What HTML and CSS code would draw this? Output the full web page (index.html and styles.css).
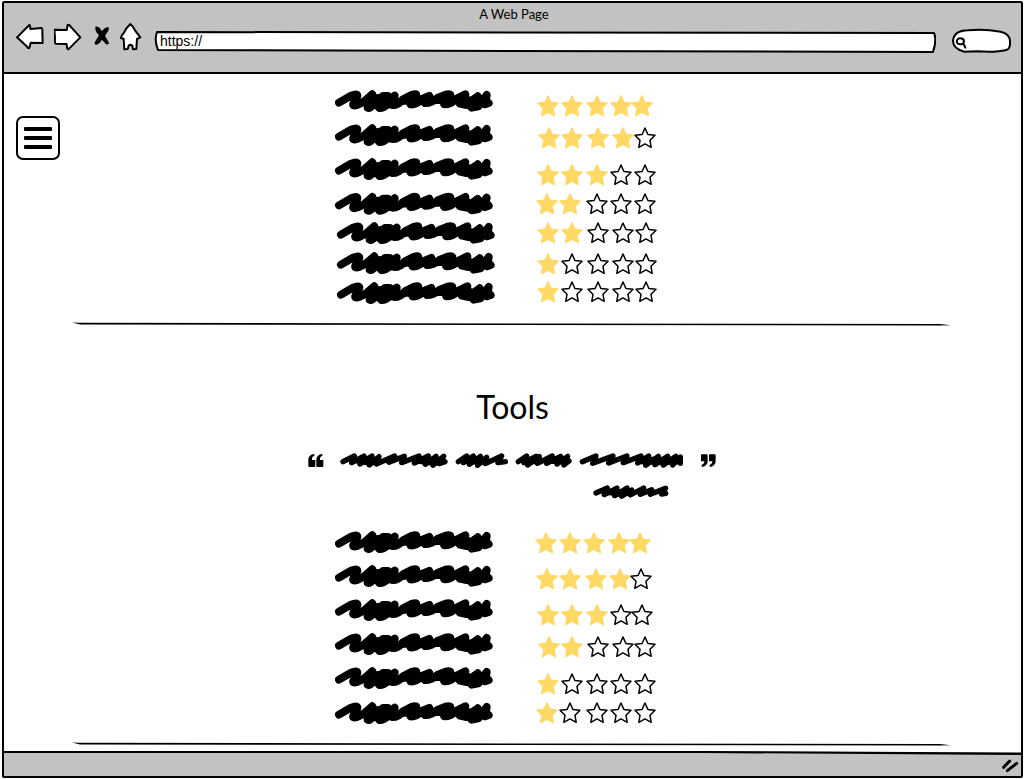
FILE: index.html
```html
<!DOCTYPE html>
<html lang="en">
<head>
<meta charset="utf-8">
<title>A Web Page</title>
<link rel="stylesheet" href="styles.css">
</head>
<body>
<svg class="defs" aria-hidden="true">
  <symbol id="full" overflow="visible"><path class="star-full" d="M0-10.500 3-4 10.500-3 5.300 2.500 6.600 10 0 6.500-6.600 10-5.300 2.500-10.500-3-3-4Z"/></symbol>
  <symbol id="empty" overflow="visible"><path class="star-empty" d="M0-10 2.900-3.500 10-2.700 5 2.300 6.200 9.300 0 5.900-6.200 9.300-5 2.300-10-2.700-2.900-3.500Z"/></symbol>
  <symbol id="skill" overflow="visible">
    <path class="ink" d="M42 53 78 32Q98 24 97 33L86 54Q80 66 98 59L118 49 142 28 128 68Q134 72 145 58L174 33 188 33 163 69Q175 70 190 55L209 32 203 60Q220 60 234 43L262 29Q276 24 273 34L257 58Q272 60 291 42L313 33 300 54Q320 54 339 38L362 29Q379 24 375 35L358 58Q378 58 391 43L421 28 405 56 425 60 458 34 440 68 460 64 485 30 480 58 491 54"/>
    <path d="M128 45 140 28 174 27 210 30 218 55 203 68 165 75 130 68ZM235 38 265 27 270 58 225 60ZM275 50 310 30 312 54 290 60ZM335 40 370 27 370 57 330 57ZM398 38 421 22 435 35 458 24 470 34 485 25 492 58 440 74 410 65Z"/>
  </symbol>
</svg>
<div class="window">
  <header class="chrome">
    <div class="title">A Web Page</div>
    <div class="toolbar">
      <button class="tool" aria-label="Back"><svg width="28" height="32" viewBox="48 66 84 96"><path class="outline" d="M51 112 88 75Q91 75 91 87L125 84Q128 86 127 96L128 129 92 128 88 144Q85 146 80 139Z"/></svg></button>
      <button class="tool" aria-label="Forward"><svg width="28" height="32" viewBox="162 66 84 96"><path class="outline" d="M163 89 200 90 203 75Q208 73 214 82L241 112 205 148Q201 149 200 132L167 131Q164 129 165 112Z"/></svg></button>
      <button class="tool" aria-label="Stop"><svg width="18" height="32" viewBox="276 66 54 96"><path d="M286 80Q294 77 301 86L306 94Q314 82 323 81 329 82 325 92L315 107 327 128Q327 135 318 133L306 119Q297 134 287 134 281 132 286 124L297 106Q284 94 286 80Z"/></svg></button>
      <button class="tool" aria-label="Home"><svg width="22" height="32" viewBox="359 66 66 96"><path class="outline" d="M390 72Q400 80 404 91L420 112 410 117 408 147 398 148 396 137Q390 132 385 137L382 147 372 148 370 117 362 114Q364 105 371 98Q377 84 390 72Z"/></svg></button>
      <div class="address">
        <svg width="100%" height="32" viewBox="0 0 782 32" preserveAspectRatio="none" aria-hidden="true"><path class="field" d="M3 10 780 11Q783 18 779 30L4 28Q0 18 3 10Z"/></svg>
        <input class="url" type="text" value="https://" aria-label="Address">
      </div>
      <div class="search">
        <svg width="60" height="32" viewBox="156 66 180 96" aria-hidden="true"><path class="outline" d="M159 123Q161 92 204 91 251 86 302 95 329 101 330 122 332 147 319 150 287 158 232 154L193 155Q159 146 159 123Z"/><path class="lens" d="M191 132 196 143M182 115C168 113 166 132 179 133 196 134 195 116 182 115Z"/></svg>
        <input class="query" type="search" aria-label="Search">
      </div>
    </div>
  </header>

  <main class="page">
    <button class="menu" aria-label="Menu"><span></span><span></span><span></span></button>

    <ul class="skills">
      <li class="row"><svg class="name" viewBox="30 -3 480 102"><use href="#skill"/></svg><svg class="stars" role="img" aria-label="5 of 5"><use href="#full" x="15" y="22"/><use href="#full" x="39" y="22"/><use href="#full" x="64" y="22"/><use href="#full" x="88" y="22"/><use href="#full" x="109" y="22"/></svg></li>
      <li class="row"><svg class="name" viewBox="30 -3 480 102"><use href="#skill"/></svg><svg class="stars" role="img" aria-label="4 of 5"><use href="#full" x="16" y="20"/><use href="#full" x="39" y="20"/><use href="#full" x="65" y="20"/><use href="#full" x="90" y="20"/><use href="#empty" x="112" y="20"/></svg></li>
      <li class="row"><svg class="name" viewBox="30 -3 480 102"><use href="#skill"/></svg><svg class="stars" role="img" aria-label="3 of 5"><use href="#full" x="15" y="23"/><use href="#full" x="39" y="23"/><use href="#full" x="64" y="23"/><use href="#empty" x="88" y="23"/><use href="#empty" x="112" y="23"/></svg></li>
      <li class="row tight"><svg class="name" viewBox="30 -3 480 102"><use href="#skill" y="2"/></svg><svg class="stars" role="img" aria-label="2 of 5"><use href="#full" x="14" y="18"/><use href="#full" x="37" y="18"/><use href="#empty" x="64" y="18"/><use href="#empty" x="88" y="18"/><use href="#empty" x="112" y="18"/></svg></li>
      <li class="row tight"><svg class="name" viewBox="30 -3 480 102"><use href="#skill" x="6"/></svg><svg class="stars" role="img" aria-label="2 of 5"><use href="#full" x="15" y="17"/><use href="#full" x="39" y="17"/><use href="#empty" x="65" y="17"/><use href="#empty" x="90" y="17"/><use href="#empty" x="113" y="17"/></svg></li>
      <li class="row tight"><svg class="name" viewBox="30 -3 480 102"><use href="#skill" x="6"/></svg><svg class="stars" role="img" aria-label="1 of 5"><use href="#full" x="15" y="18"/><use href="#empty" x="39" y="18"/><use href="#empty" x="65" y="18"/><use href="#empty" x="90" y="18"/><use href="#empty" x="113" y="18"/></svg></li>
      <li class="row"><svg class="name" viewBox="30 -3 480 102"><use href="#skill" x="6"/></svg><svg class="stars" role="img" aria-label="1 of 5"><use href="#full" x="15" y="16"/><use href="#empty" x="39" y="16"/><use href="#empty" x="65" y="16"/><use href="#empty" x="90" y="16"/><use href="#empty" x="113" y="16"/></svg></li>
    </ul>

    <svg class="rule" viewBox="0 0 879 4" preserveAspectRatio="none" aria-hidden="true"><path d="M0 .5 8 .8 868 2 879 3.300 868 3.600 8 2.400Z"/></svg>

    <h1 class="heading">Tools</h1>
    <div class="quote">
      <svg width="16" height="20" viewBox="24 195 48 60" aria-hidden="true"><path d="M43 207V213Q35 214 36 225H46V243Q46 246 42 246H28Q25 246 25 243V223Q26 209 43 207ZM67 207V213Q59 214 60 225H70V243Q70 246 66 246H52Q49 246 49 243V223Q50 209 67 207Z"/></svg>
      <svg class="words" width="345" height="52" viewBox="120 195 1035 156" role="img" aria-label="Quote">
        <path class="ink small" d="M129 230 163 213 155 233 192 213 180 237 216 213 208 240 237 215 229 237 284 213 267 232 313 214 305 233 357 213 343 234 385 213 376 238 408 214 399 241 431 214 417 236 435 230M475 230 500 213 490 233 520 213 508 238 541 214 533 241 560 217 556 236 605 213 594 233 616 230"/>
        <path class="ink small" d="M655 230 680 213 672 233 708 214 683 240 718 215 712 235 757 213 740 235 782 214 771 237 803 214 792 240 807 228M847 230 888 213 878 235 939 213 926 234 981 213 970 233 1023 213 1013 234 1046 213 1037 241 1075 214 1065 239 1103 214 1090 240 1127 214 1118 240 1141 216V235"/>
        <path class="ink small" d="M888 324 922 309 913 329 951 309 944 332 981 309 965 334 995 315 991 330 1031 309 1021 328 1055 314 1051 328 1097 310 1085 327 1097 325"/>
        <path d="M190 215H235V238L210 242 160 234ZM265 218H285V234H245ZM360 215H430L438 232 400 242 340 235ZM490 215 550 215 550 238 535 241 480 232ZM665 215H715V236L680 240 660 230ZM755 215 803 215 803 238 735 236ZM1025 215H1145V238L1100 240 1015 238ZM925 312H985V330L965 335 920 330ZM1020 315H1031V328H1000Z"/>
      </svg>
      <svg width="16" height="20" viewBox="702 195 48 60" aria-hidden="true"><path d="M704 208H718Q722 208 722 212V230Q720 243 704 246V239Q712 238 712 229H702V211Q702 208 704 208ZM728 208H742Q746 208 746 212V230Q744 243 728 246V239Q736 238 736 229H726V211Q726 208 728 208Z"/></svg>
    </div>

    <ul class="skills">
      <li class="row"><svg class="name" viewBox="30 -3 480 102"><use href="#skill"/></svg><svg class="stars" role="img" aria-label="5 of 5"><use href="#full" x="13" y="18"/><use href="#full" x="37" y="18"/><use href="#full" x="61" y="18"/><use href="#full" x="86" y="18"/><use href="#full" x="107" y="18"/></svg></li>
      <li class="row"><svg class="name" viewBox="30 -3 480 102"><use href="#skill"/></svg><svg class="stars" role="img" aria-label="4 of 5"><use href="#full" x="14" y="20"/><use href="#full" x="37" y="20"/><use href="#full" x="63" y="20"/><use href="#full" x="87" y="20"/><use href="#empty" x="108" y="20"/></svg></li>
      <li class="row"><svg class="name" viewBox="30 -3 480 102"><use href="#skill"/></svg><svg class="stars" role="img" aria-label="3 of 5"><use href="#full" x="15" y="22"/><use href="#full" x="39" y="22"/><use href="#full" x="64" y="22"/><use href="#empty" x="88" y="22"/><use href="#empty" x="109" y="22"/></svg></li>
      <li class="row"><svg class="name" viewBox="30 -3 480 102"><use href="#skill"/></svg><svg class="stars" role="img" aria-label="2 of 5"><use href="#full" x="16" y="20"/><use href="#full" x="39" y="20"/><use href="#empty" x="65" y="20"/><use href="#empty" x="90" y="20"/><use href="#empty" x="112" y="20"/></svg></li>
      <li class="row"><svg class="name" viewBox="30 -3 480 102"><use href="#skill"/></svg><svg class="stars" role="img" aria-label="1 of 5"><use href="#full" x="15" y="23"/><use href="#empty" x="39" y="23"/><use href="#empty" x="64" y="23"/><use href="#empty" x="88" y="23"/><use href="#empty" x="112" y="23"/></svg></li>
      <li class="row"><svg class="name" viewBox="30 -3 480 102"><use href="#skill" y="3"/></svg><svg class="stars" role="img" aria-label="1 of 5"><use href="#full" x="14" y="18"/><use href="#empty" x="37" y="18"/><use href="#empty" x="64" y="18"/><use href="#empty" x="88" y="18"/><use href="#empty" x="112" y="18"/></svg></li>
    </ul>

    <svg class="rule last" viewBox="0 0 879 4" preserveAspectRatio="none" aria-hidden="true"><path d="M0 .5 8 .8 868 2 879 3.300 868 3.600 8 2.400Z"/></svg>
  </main>

  <footer class="status">
    <svg class="edge" viewBox="0 0 1017 4" preserveAspectRatio="none" aria-hidden="true"><path d="M0 0H1017V2L700 0Z" fill="#fff"/><path d="M0 0 700 0 1017 1.500V4L700 2 0 2Z"/></svg>
    <svg class="grip" width="18" height="14" viewBox="303 178 54 42" aria-hidden="true"><path class="grip-lines" d="M311 203 329 184M322 213 350 191"/></svg>
  </footer>
</div>
</body>
</html>
```

FILE: styles.css
```css
* { box-sizing: border-box; }
body {
  margin: 0;
  background: #fff;
  color: #000;
  font-family: Lato, "Liberation Sans", sans-serif;
}
svg { display: block; flex: none; }
button, input { font: inherit; color: inherit; }
.defs { position: absolute; width: 0; height: 0; }

.window {
  display: flex;
  flex-direction: column;
  min-height: calc(100vh - 2px);
  margin: 1px 1px 1px 2px;
  border: 2px solid #000;
  border-radius: 2px;
}

.chrome {
  padding: 3px 9px 18px 12px;
  background: #c2c2c2;
  border-bottom: 2px solid #000;
}
.title { font-size: 13px; line-height: 16px; text-align: center; }
.toolbar { display: flex; gap: 10px; }
.tool { flex: none; padding: 0; border: 0; background: none; }
.outline { fill: #fff; stroke: #000; stroke-width: 6; stroke-linejoin: round; }
.address { position: relative; flex: 1; margin: 0 6px 0 2px; }
.field { fill: #fff; stroke: #000; stroke-width: 2; stroke-linejoin: round; }
.url {
  position: absolute;
  inset: 10px 6px 4px;
  width: calc(100% - 12px);
  padding: 0;
  border: 0;
  background: none;
  font-family: "Liberation Sans", sans-serif;
  font-size: 14px;
  line-height: 16px;
}
.search { position: relative; }
.lens { fill: none; stroke: #000; stroke-width: 6; stroke-linecap: round; }
.query {
  position: absolute;
  inset: 9px 6px 5px 16px;
  width: 38px;
  padding: 0;
  border: 0;
  background: none;
}

.page { position: relative; flex: 1; padding-bottom: 4px; }
.menu {
  position: absolute;
  top: 42px;
  left: 12px;
  display: flex;
  flex-direction: column;
  align-items: center;
  justify-content: center;
  gap: 5px;
  width: 44px;
  height: 44px;
  padding: 0;
  border: 2px solid #000;
  border-radius: 7px;
  background: #fff;
}
.menu span { width: 28px; height: 4px; border-radius: 1px; background: #000; }

.skills { margin: 0; padding: 10px 31px 0 0; list-style: none; }
.row { display: flex; justify-content: center; gap: 38px; height: 34px; }
.tight { height: 30px; }
.name { width: 160px; height: 34px; }
.stars { width: 126px; height: 34px; overflow: visible; }
.star-full { fill: #ffd966; stroke: #ffd966; stroke-linejoin: round; }
.star-empty { fill: #fff; stroke: #000; stroke-width: 1.5; stroke-linejoin: round; }
.ink {
  fill: none;
  stroke: #000;
  stroke-width: 24;
  stroke-linecap: round;
  stroke-linejoin: round;
}
.small { stroke-width: 16; }

.rule { width: calc(100% - 138px); height: 4px; margin: 12px 70px 0 68px; }
.last { margin-top: 13px; }
.heading {
  margin: 61px 0 23px;
  font-size: 32px;
  font-weight: 400;
  line-height: 40px;
  text-align: center;
}
.quote { display: flex; justify-content: center; gap: 16px; margin-bottom: 13px; }

.status {
  position: relative;
  display: flex;
  align-items: center;
  justify-content: flex-end;
  height: 25px;
  padding: 4px 2px 0 0;
  background: #c2c2c2;
}
.edge { position: absolute; top: 0; left: 0; width: 100%; height: 4px; }
.grip-lines { stroke: #000; stroke-width: 9; stroke-linecap: round; }
```
